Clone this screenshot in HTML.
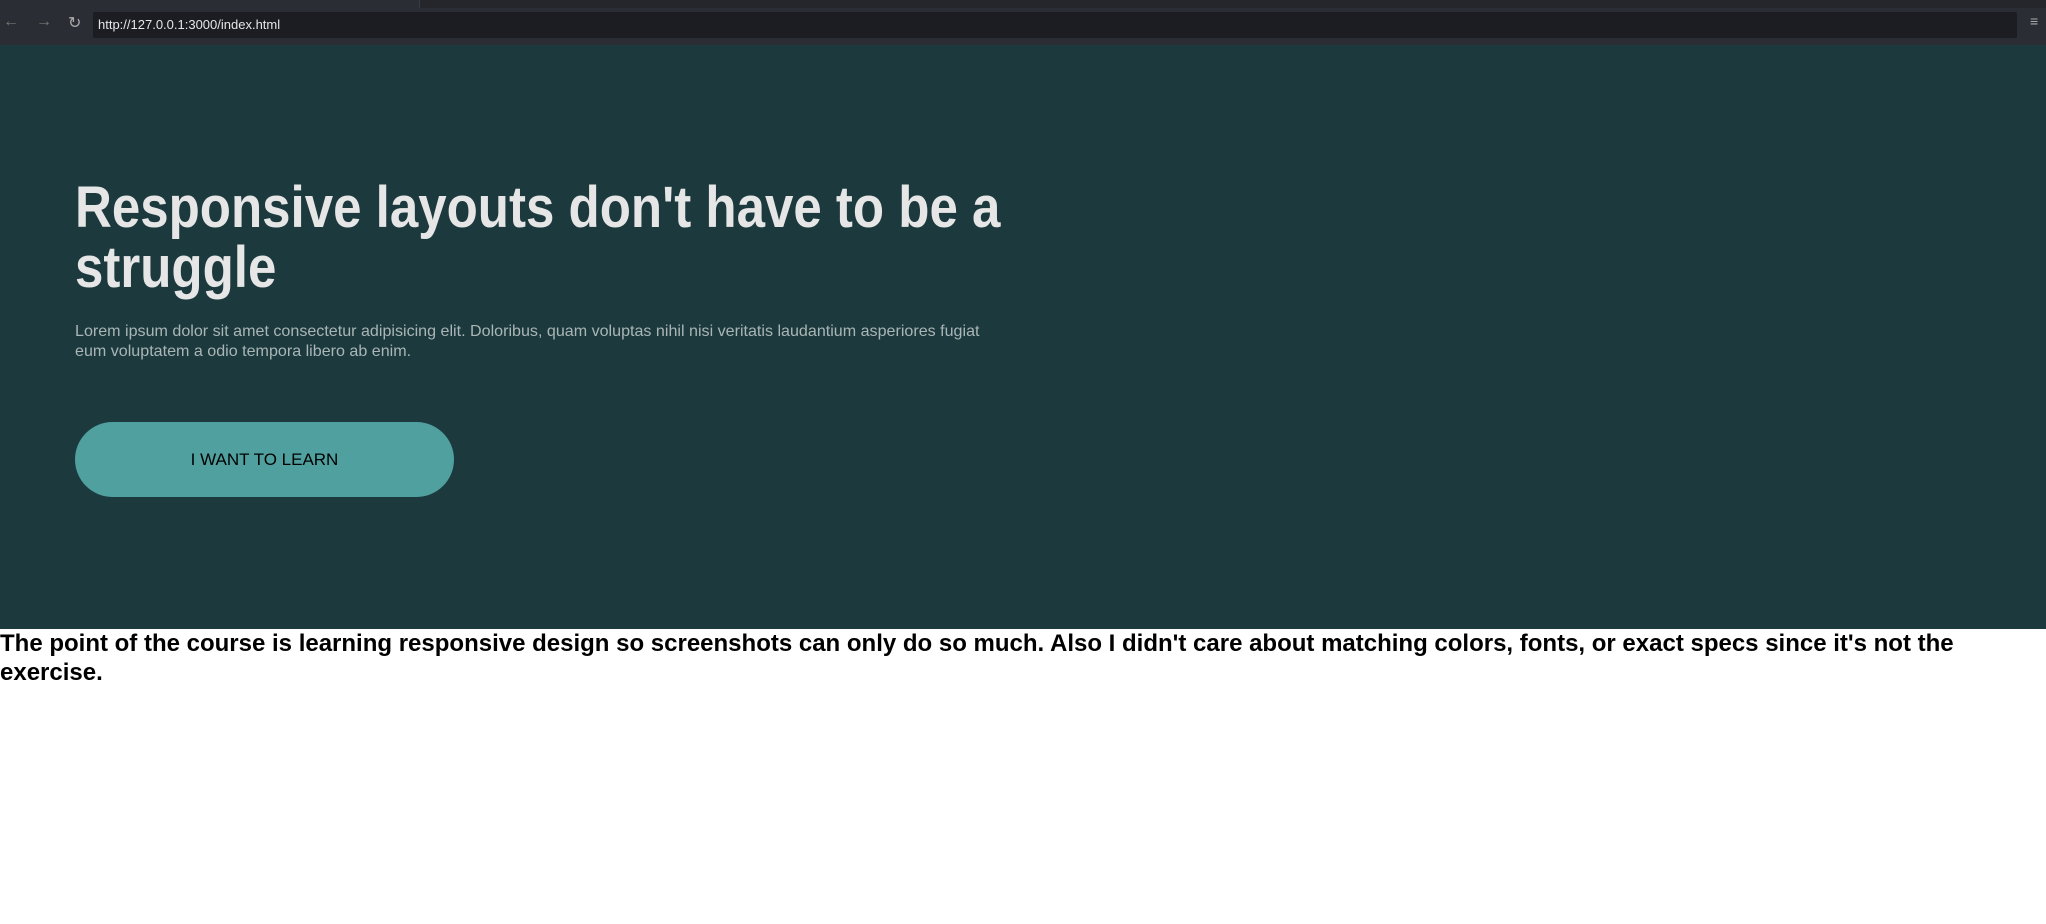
<!DOCTYPE html>
<html><head><meta charset="utf-8"><style>
*{margin:0;padding:0;box-sizing:border-box}
body{width:2046px;height:924px;background:#fff;font-family:"Liberation Sans",Arial,sans-serif;overflow:hidden;position:relative}
.chrome{position:absolute;left:0;top:0;width:2046px;height:45px;background:#2b2d35}
.tabline{position:absolute;left:419px;top:0;width:1627px;height:8px;background:#24262c;border-left:1px solid #3a3c44}
.url{position:absolute;left:93px;top:12px;width:1924px;height:26px;background:#1c1d22;border-radius:2px;color:#e6e6e6;font-size:13px;line-height:26px;padding-left:5px}
.nav{position:absolute;top:13px;color:#777;font-size:16px}
.hero{position:absolute;left:0;top:45px;width:2046px;height:584px;background:#1c3a3e}
h1{position:absolute;left:75px;top:133px;width:1200px;font-size:58px;line-height:60px;color:#e6e6e6;font-weight:bold;transform:scaleX(0.88);transform-origin:0 0}
.p{position:absolute;left:75px;top:277px;width:1100px;font-size:16px;line-height:20px;color:#aab5b5;transform:scaleX(1.005);transform-origin:0 0}
.btn{position:absolute;left:75px;top:377px;width:379px;height:75px;border-radius:38px;background:#50a0a0;color:#000;font-size:17px;text-align:center;line-height:75px}
.note{position:absolute;left:0;top:629px;width:1990px;font-size:24px;line-height:29px;font-weight:bold;color:#000}
</style></head><body>
<div class="chrome"><div class="tabline"></div>
<span class="nav" style="left:3px">&#8592;</span><span class="nav" style="left:36px">&#8594;</span><span class="nav" style="left:68px;color:#aaa">&#8635;</span>
<div class="url">http://127.0.0.1:3000/index.html</div>
<span class="nav" style="left:2030px;color:#aaa;font-size:14px">&#8801;</span></div>
<div class="hero">
<h1>Responsive layouts don't have to be a<br>struggle</h1>
<div class="p">Lorem ipsum dolor sit amet consectetur adipisicing elit. Doloribus, quam voluptas nihil nisi veritatis laudantium asperiores fugiat<br>eum voluptatem a odio tempora libero ab enim.</div>
<div class="btn">I WANT TO LEARN</div>
</div>
<div class="note">The point of the course is learning responsive design so screenshots can only do so much. Also I didn't care about matching colors, fonts, or exact specs since it's not the exercise.</div>
</body></html>
